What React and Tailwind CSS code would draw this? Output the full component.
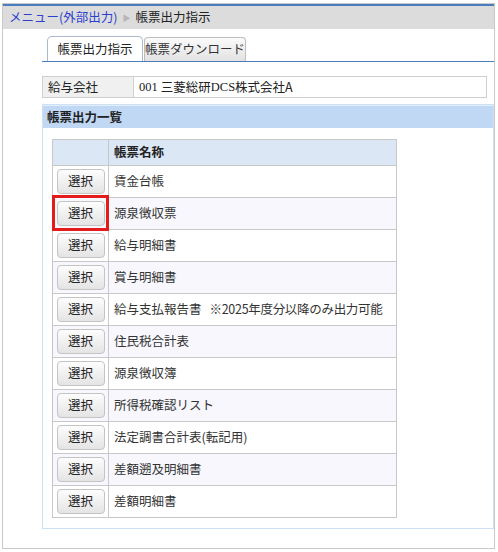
import React from 'react';

// 帳票一覧
const reports = [
  { name: '賃金台帳' },
  { name: '源泉徴収票' },
  { name: '給与明細書' },
  { name: '賞与明細書' },
  { name: '給与支払報告書', note: '※2025年度分以降のみ出力可能' },
  { name: '住民税合計表' },
  { name: '源泉徴収簿' },
  { name: '所得税確認リスト' },
  { name: '法定調書合計表(転記用)' },
  { name: '差額遡及明細書' },
  { name: '差額明細書' },
];

const FONT = { fontFamily: '"Noto Sans CJK JP", "Noto Sans", sans-serif' };

function SelectButton() {
  return (
    <button className="w-[48px] h-[25px] rounded-[4px] border border-[#c4c4c4] bg-gradient-to-b from-[#fdfdfd] to-[#e4e4e4] text-[12.5px] text-[#222] leading-none">
      選択
    </button>
  );
}

export default function App() {
  return (
    <div className="w-[498px] h-[552px] bg-white pt-[3px] pl-[2px] text-[#222]" style={FONT}>
      <div className="w-[493px] h-[546px] border border-[#c9c9c9] flex flex-col">
        {/* breadcrumb */}
        <div className="h-[25px] border-t-2 border-[#4a7dbd] bg-[#dcdcdc] flex items-center pl-[6px] text-[12.5px]">
          <span className="text-[#2b3fd0]">メニュー(外部出力)</span>
          <span className="mx-[5px] text-[#b5b5b5] text-[8px]">▶</span>
          <span>帳票出力指示</span>
        </div>

        <div className="pl-[39px] pt-[7px] flex flex-col">
          {/* tabs */}
          <div className="flex items-end pl-[5px] border-b border-[#4a7dbd] h-[26px]">
            <div className="w-[96px] h-[25px] rounded-t-[5px] border border-b-0 border-[#a9b9cf] bg-white flex items-center justify-center text-[12.5px]">
              帳票出力指示
            </div>
            <div className="ml-[1px] w-[102px] h-[24px] rounded-t-[4px] border border-b-0 border-[#bdbdbd] bg-gradient-to-b from-[#fbfbfb] to-[#e2e2e2] flex items-center justify-center text-[12.5px] text-[#333]">
              帳票ダウンロード
            </div>
          </div>

          {/* company */}
          <div className="mt-[14px] w-[445px] h-[22px] flex border border-[#cfcfcf] text-[12.5px]">
            <div className="w-[91px] bg-[#f0f0f0] border-r border-[#cfcfcf] flex items-center pl-[5px]">給与会社</div>
            <div className="flex-1 flex items-center pl-[5px]" style={{ fontFamily: '"Liberation Serif", "Noto Sans CJK JP", serif' }}>
              <span>001 </span>
              <span style={FONT} className="ml-[3px]">三菱総研</span>
              <span>DCS</span>
              <span style={FONT}>株式会社</span>
              <span style={FONT}>A</span>
            </div>
          </div>

          {/* report list */}
          <div className="mt-[6px] border border-[#cde0f6] pb-[10px]">
            <div className="h-[23px] bg-[#c1d8f5] border-t border-[#e3eefb] flex items-center pl-[4px] text-[12.5px] font-bold">
              帳票出力一覧
            </div>
            <div className="pl-[9px] pt-[11px]">
              <table className="border-collapse text-[12.5px] text-[#333]">
                <thead>
                  <tr className="h-[26px] bg-[#dce7f5]">
                    <th className="w-[56px] border border-[#c8c8c8]"></th>
                    <th className="w-[288px] border border-[#c8c8c8] text-left font-bold pl-[5px] text-[#222]">帳票名称</th>
                  </tr>
                </thead>
                <tbody>
                  {reports.map((r, i) => (
                    <tr key={r.name} className={i % 2 === 1 ? 'h-[32px] bg-[#f7f7fd]' : 'h-[32px] bg-white'}>
                      <td className="relative border border-[#c8c8c8] text-center align-middle">
                        <SelectButton />
                        {i === 1 && (
                          <div className="absolute left-[-1px] top-[-3px] w-[57px] h-[36px] border-[3px] border-[#e41b1b]"></div>
                        )}
                      </td>
                      <td className="border border-[#c8c8c8] pl-[5px] whitespace-nowrap">
                        {r.name}
                        {r.note && <span className="ml-[8px] tracking-[-0.3px]">{r.note}</span>}
                      </td>
                    </tr>
                  ))}
                </tbody>
              </table>
            </div>
          </div>
        </div>
      </div>
    </div>
  );
}
